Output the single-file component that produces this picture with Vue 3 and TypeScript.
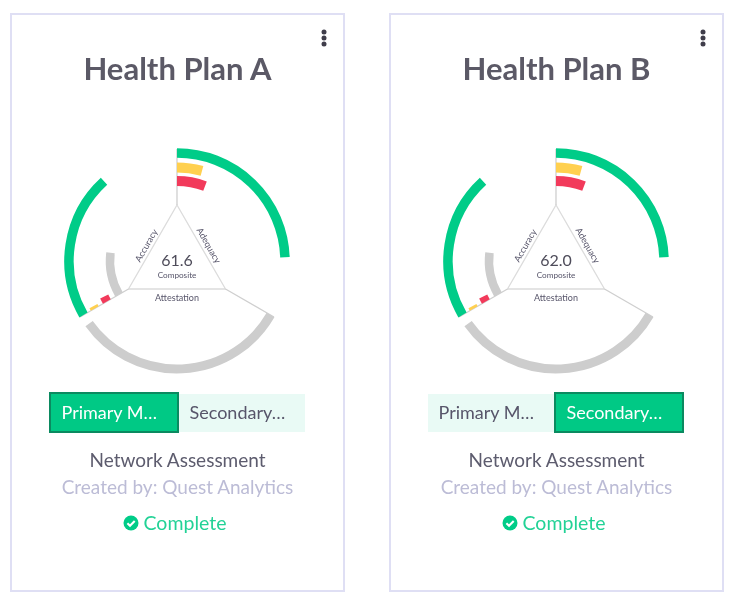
<script setup lang="ts">
interface Arc { r: number; w: number; from: number; to: number; color: string }
interface Plan { name: string; score: string; active: number }

const C = 120
const green = '#00cc88'
const yellow = '#ffd04f'
const red = '#f23a5b'
const grey = '#cdcdcd'

const plans: Plan[] = [
  { name: 'Health Plan A', score: '61.6', active: 0 },
  { name: 'Health Plan B', score: '62.0', active: 1 },
]
const tabs = ['Primary M…', 'Secondary…']

const arcs: Arc[] = [
  { r: 108, w: 9.5, from: 0, to: 88, color: green },
  { r: 93.5, w: 10, from: 0, to: 15.5, color: yellow },
  { r: 80, w: 10, from: 0, to: 20.5, color: red },
  { r: 108, w: 9, from: 120, to: 234.5, color: grey },
  { r: 108, w: 9.5, from: 240, to: 317.5, color: green },
  { r: 95, w: 9, from: 240, to: 241.6, color: yellow },
  { r: 81, w: 9, from: 240, to: 244, color: red },
  { r: 67, w: 8.5, from: 240, to: 277, color: grey },
]

function pt(r: number, deg: number): string {
  const a = (deg * Math.PI) / 180
  return `${(C + r * Math.sin(a)).toFixed(2)} ${(C - r * Math.cos(a)).toFixed(2)}`
}
function arcPath(a: Arc): string {
  const large = a.to - a.from > 180 ? 1 : 0
  return `M ${pt(a.r, a.from)} A ${a.r} ${a.r} 0 ${large} 1 ${pt(a.r, a.to)}`
}
const triangle = `${pt(56, 0)} ${pt(56, 120)} ${pt(56, 240)}`
const spokes = [0, 120, 240].map((d) => `M ${pt(56, d)} L ${pt(112, d)}`).join(' ')
</script>

<template>
  <div class="page">
    <section v-for="plan in plans" :key="plan.name" class="card">
      <svg class="kebab" width="6" height="18" viewBox="0 0 6 18" aria-hidden="true">
        <circle cx="3" cy="3" r="2.5" />
        <circle cx="3" cy="9" r="2.5" />
        <circle cx="3" cy="15" r="2.5" />
      </svg>
      <h2 class="title">{{ plan.name }}</h2>
      <svg class="chart" width="240" height="240" viewBox="0 0 240 240">
        <polygon class="tri" :points="triangle" />
        <path class="spoke" :d="spokes" />
        <path
          v-for="(a, i) in arcs"
          :key="i"
          :d="arcPath(a)"
          :stroke="a.color"
          :stroke-width="a.w"
          fill="none"
        />
        <text class="score" x="120" y="125" text-anchor="middle">{{ plan.score }}</text>
        <text class="label small" x="120" y="137" text-anchor="middle">Composite</text>
        <text class="label" x="120" y="160" text-anchor="middle">Attestation</text>
        <text class="label" text-anchor="middle" transform="translate(92 106) rotate(-60)">Accuracy</text>
        <text class="label" text-anchor="middle" transform="translate(149 106) rotate(60)">Adequacy</text>
      </svg>
      <div class="tabs">
        <button
          v-for="(t, i) in tabs"
          :key="t"
          type="button"
          class="tab"
          :class="{ active: plan.active === i }"
        >{{ t }}</button>
      </div>
      <p class="assess">Network Assessment</p>
      <p class="creator">Created by: Quest Analytics</p>
      <p class="status">
        <svg width="16" height="16" viewBox="0 0 16 16" aria-hidden="true">
          <circle cx="8" cy="8" r="7.5" fill="#00cc88" />
          <path d="M4.4 8.2 L7 10.7 L11.7 5.9" fill="none" stroke="#fff" stroke-width="2.1" />
        </svg>
        <span>Complete</span>
      </p>
    </section>
  </div>
</template>

<style scoped>
.page {
  display: flex;
  gap: 44px;
  padding: 13px 0 0 10px;
  width: 737px;
  height: 600px;
  box-sizing: border-box;
  background: #fff;
  font-family: Lato, "Liberation Sans", sans-serif;
}
.card {
  position: relative;
  box-sizing: border-box;
  width: 335px;
  height: 579px;
  border: 2px solid #dfdff4;
  display: flex;
  flex-direction: column;
  align-items: center;
  filter: blur(0.5px);
}
.kebab {
  position: absolute;
  top: 14px;
  right: 16.5px;
  fill: #3f3d4a;
}
.title {
  margin: 33px 0 0;
  height: 40px;
  line-height: 40px;
  font-size: 31px;
  font-weight: 700;
  color: #5b5966;
  white-space: nowrap;
}
.chart {
  display: block;
  margin: 53px 0 0 -1px;
  flex: none;
}
.tri {
  fill: none;
  stroke: #dcdcdc;
  stroke-width: 1.3;
}
.spoke {
  fill: none;
  stroke: #cfcfcf;
  stroke-width: 1.3;
}
.score {
  font-size: 16px;
  fill: #4e4c5a;
}
.label {
  font-size: 9px;
  fill: #57556a;
}
.label.small {
  font-size: 8.2px;
}
.tabs {
  display: flex;
  align-items: center;
  margin: 11px 2px 0 0;
}
.tab {
  box-sizing: border-box;
  width: 126px;
  height: 38px;
  padding: 0 0 2px 11px;
  border: 0;
  background: #e9faf5;
  color: #57556a;
  font: 400 18px Lato, "Liberation Sans", sans-serif;
  text-align: left;
}
.tab.active {
  width: 130px;
  height: 41px;
  background: #00c985;
  border: 2px solid #0b8a60;
  color: #fff;
}
.assess,
.creator,
.status {
  margin: 0;
  line-height: 24px;
  white-space: nowrap;
}
.assess {
  margin-top: 15px;
  font-size: 19px;
  color: #5d5c6e;
}
.creator {
  margin-top: 3px;
  font-size: 19px;
  color: #bcbcd6;
}
.status {
  margin: 12px 6px 0 0;
  font-size: 19.5px;
  display: flex;
  align-items: center;
  gap: 5px;
  color: #22d296;
}
</style>
